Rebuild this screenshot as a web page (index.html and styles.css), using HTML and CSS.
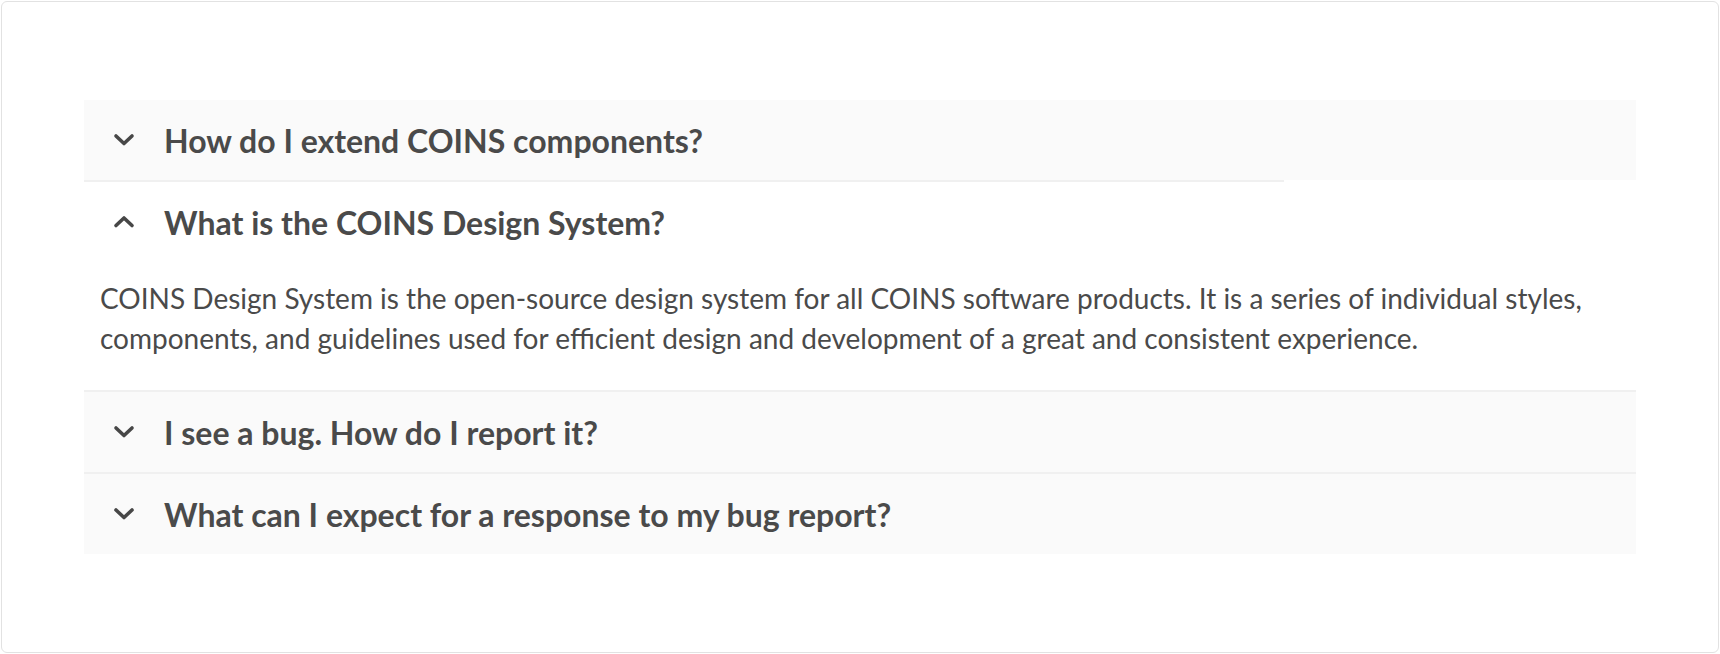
FILE: index.html
```html
<!DOCTYPE html>
<html>
<head>
<meta charset="utf-8">
<link rel="stylesheet" href="styles.css">
</head>
<body>
<div class="card">
  <div class="accordion">
    <div class="item closed partial">
      <div class="header">
        <svg class="chev" viewBox="0 0 24 14" width="24" height="14"><path d="M4 3 L12 10.5 L20 3" fill="none" stroke="#474747" stroke-width="3.6" stroke-linecap="round" stroke-linejoin="round"/></svg>
        <span class="title">How do I extend COINS components?</span>
      </div>
    </div>
    <div class="item open">
      <div class="header">
        <svg class="chev" viewBox="0 0 24 14" width="24" height="14"><path d="M4 10.5 L12 3 L20 10.5" fill="none" stroke="#474747" stroke-width="3.6" stroke-linecap="round" stroke-linejoin="round"/></svg>
        <span class="title">What is the COINS Design System?</span>
      </div>
      <div class="content">COINS Design System is the open-source design system for all COINS software products. It is a series of individual styles, components, and guidelines used for efficient design and development of a great and consistent experience.</div>
    </div>
    <div class="item closed">
      <div class="header">
        <svg class="chev" viewBox="0 0 24 14" width="24" height="14"><path d="M4 3 L12 10.5 L20 3" fill="none" stroke="#474747" stroke-width="3.6" stroke-linecap="round" stroke-linejoin="round"/></svg>
        <span class="title">I see a bug. How do I report it?</span>
      </div>
    </div>
    <div class="item closed">
      <div class="header">
        <svg class="chev" viewBox="0 0 24 14" width="24" height="14"><path d="M4 3 L12 10.5 L20 3" fill="none" stroke="#474747" stroke-width="3.6" stroke-linecap="round" stroke-linejoin="round"/></svg>
        <span class="title">What can I expect for a response to my bug report?</span>
      </div>
    </div>
  </div>
</div>
</body>
</html>
```

FILE: styles.css
```css
html, body {
  margin: 0;
  padding: 0;
  background: #ffffff;
}
body {
  font-family: Lato, "Open Sans", sans-serif;
  color: #4a4a4a;
}
.card {
  margin: 1px;
  height: 652px;
  box-sizing: border-box;
  border: 1px solid #e2e2e2;
  border-radius: 6px;
  padding: 98px 82px 0 82px;
  background: #fff;
}
.accordion {
  display: flex;
  flex-direction: column;
}
.item {
  position: relative;
}
.item.closed {
  background: #fafafa;
}
.item + .item {
  border-top: 2px solid #f0f0f0;
}
.item.partial + .item {
  border-top-color: transparent;
}
.item.partial::after {
  content: "";
  position: absolute;
  left: 0;
  bottom: -2px;
  width: 1200px;
  height: 2px;
  background: #f0f0f0;
}
.header {
  height: 80px;
  display: flex;
  align-items: center;
  padding-left: 28px;
  gap: 28px;
}
.chev {
  flex: none;
}
.title {
  font-weight: 700;
  font-size: 32px;
}
.content {
  padding: 16px 40px 32px 16px;
  font-size: 28px;
  line-height: 40px;
}
```
